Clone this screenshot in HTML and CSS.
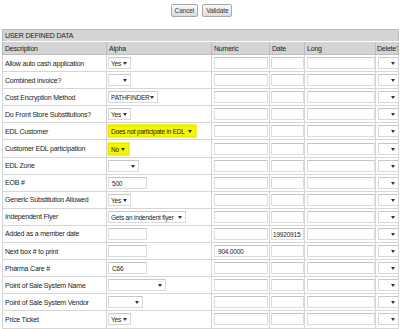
FILE: index.html
```html
<!DOCTYPE html>
<html>
<head>
  <title>User Defined Data</title>
  <link rel="stylesheet" href="styles.css">
</head>
<body>

<div class="actions">
  <button class="btn">Cancel</button>
  <button class="btn">Validate</button>
</div>

<table class="udd">
  <colgroup>
    <col class="c-desc"><col class="c-alpha"><col class="c-num"><col class="c-date"><col class="c-long"><col class="c-del">
  </colgroup>
  <tr class="section"><th colspan="6">USER DEFINED DATA</th></tr>
  <tr class="heads">
    <th>Description</th><th>Alpha</th><th>Numeric</th><th>Date</th><th>Long</th><th>Delete?</th>
  </tr>
  <tr>
    <td>Allow auto cash application</td>
    <td><span class="sel w22">Yes<i></i></span></td>
    <td><span class="txt num"></span></td><td><span class="txt date"></span></td><td><span class="txt long"></span></td>
    <td><span class="sel del"><i></i></span></td>
  </tr>
  <tr>
    <td>Combined invoice?</td>
    <td><span class="sel w22"><i></i></span></td>
    <td><span class="txt num"></span></td><td><span class="txt date"></span></td><td><span class="txt long"></span></td>
    <td><span class="sel del"><i></i></span></td>
  </tr>
  <tr>
    <td>Cost Encryption Method</td>
    <td><span class="sel w48">PATHFINDER<i></i></span></td>
    <td><span class="txt num"></span></td><td><span class="txt date"></span></td><td><span class="txt long"></span></td>
    <td><span class="sel del"><i></i></span></td>
  </tr>
  <tr>
    <td>Do Front Store Substitutions?</td>
    <td><span class="sel w22">Yes<i></i></span></td>
    <td><span class="txt num"></span></td><td><span class="txt date"></span></td><td><span class="txt long"></span></td>
    <td><span class="sel del"><i></i></span></td>
  </tr>
  <tr>
    <td>EDL Customer</td>
    <td><span class="sel w86 mark">Does not participate in EDL<i></i></span></td>
    <td><span class="txt num"></span></td><td><span class="txt date"></span></td><td><span class="txt long"></span></td>
    <td><span class="sel del"><i></i></span></td>
  </tr>
  <tr>
    <td>Customer EDL participation</td>
    <td><span class="sel w20 mark">No<i></i></span></td>
    <td><span class="txt num"></span></td><td><span class="txt date"></span></td><td><span class="txt long"></span></td>
    <td><span class="sel del"><i></i></span></td>
  </tr>
  <tr>
    <td>EDL Zone</td>
    <td><span class="sel w31"><i></i></span></td>
    <td><span class="txt num"></span></td><td><span class="txt date"></span></td><td><span class="txt long"></span></td>
    <td><span class="sel del"><i></i></span></td>
  </tr>
  <tr>
    <td>EOB #</td>
    <td><span class="txt alpha">500</span></td>
    <td><span class="txt num"></span></td><td><span class="txt date"></span></td><td><span class="txt long"></span></td>
    <td><span class="sel del"><i></i></span></td>
  </tr>
  <tr>
    <td>Generic Substitution Allowed</td>
    <td><span class="sel w22">Yes<i></i></span></td>
    <td><span class="txt num"></span></td><td><span class="txt date"></span></td><td><span class="txt long"></span></td>
    <td><span class="sel del"><i></i></span></td>
  </tr>
  <tr>
    <td>Independent Flyer</td>
    <td><span class="sel w78">Gets an indendent flyer<i></i></span></td>
    <td><span class="txt num"></span></td><td><span class="txt date"></span></td><td><span class="txt long"></span></td>
    <td><span class="sel del"><i></i></span></td>
  </tr>
  <tr>
    <td>Added as a member date</td>
    <td><span class="txt alpha"></span></td>
    <td><span class="txt num"></span></td><td><span class="txt date">19920915</span></td><td><span class="txt long"></span></td>
    <td><span class="sel del"><i></i></span></td>
  </tr>
  <tr>
    <td>Next box # to print</td>
    <td><span class="txt alpha"></span></td>
    <td><span class="txt num">904.0000</span></td><td><span class="txt date"></span></td><td><span class="txt long"></span></td>
    <td><span class="sel del"><i></i></span></td>
  </tr>
  <tr>
    <td>Pharma Care #</td>
    <td><span class="txt alpha">C66</span></td>
    <td><span class="txt num"></span></td><td><span class="txt date"></span></td><td><span class="txt long"></span></td>
    <td><span class="sel del"><i></i></span></td>
  </tr>
  <tr>
    <td>Point of Sale System Name</td>
    <td><span class="sel w58"><i></i></span></td>
    <td><span class="txt num"></span></td><td><span class="txt date"></span></td><td><span class="txt long"></span></td>
    <td><span class="sel del"><i></i></span></td>
  </tr>
  <tr>
    <td>Point of Sale System Vendor</td>
    <td><span class="sel w35"><i></i></span></td>
    <td><span class="txt num"></span></td><td><span class="txt date"></span></td><td><span class="txt long"></span></td>
    <td><span class="sel del"><i></i></span></td>
  </tr>
  <tr>
    <td>Price Ticket</td>
    <td><span class="sel w22">Yes<i></i></span></td>
    <td><span class="txt num"></span></td><td><span class="txt date"></span></td><td><span class="txt long"></span></td>
    <td><span class="sel del"><i></i></span></td>
  </tr>
</table>

</body>
</html>
```

FILE: styles.css
```css
/* Base */
body {
  margin: 0;
  padding: 0 2px;
  background: #fff;
  color: #222;
  font-family: "Liberation Sans", Arial, sans-serif;
  font-size: 7px;
  letter-spacing: -0.2px;
}

/* Top buttons */
.actions {
  display: flex;
  justify-content: center;
  gap: 4px;
  padding-top: 4px;
  height: 29px;
  box-sizing: border-box;
  padding-left: 3px;
}
.btn {
  height: 13px;
  padding: 0 3px;
  font-family: inherit;
  font-size: 6.5px;
  letter-spacing: -0.1px;
  color: #333;
  background: linear-gradient(#fafafa, #dcdcdc);
  border: 1px solid #a8a8a8;
  border-radius: 2px;
}

/* Table */
.udd {
  width: 396px;
  table-layout: fixed;
  border-collapse: collapse;
}
.c-desc { width: 104px; }
.c-alpha { width: 105px; }
.c-num { width: 58px; }
.c-date { width: 35px; }
.c-long { width: 71px; }
.c-del { width: 23px; }

.udd th {
  text-align: left;
  font-weight: normal;
  background: #d4d4d4;
  padding: 0 2px;
  border: 1px solid #bcbcbc;
  white-space: nowrap;
  overflow: hidden;
}
.udd .heads th:last-child {
  padding: 0 0 0 1px;
}
.udd .section th {
  height: 11px;
  border-bottom: 1px solid #fff;
}
.udd .heads th {
  height: 12px;
}
.udd td {
  height: 16.1px;
  padding: 0 1px;
  border: 1px solid #d6d6d6;
  white-space: nowrap;
  overflow: hidden;
}
.udd td:first-child {
  padding-left: 2px;
}

/* Text boxes */
.txt {
  display: block;
  height: 12px;
  line-height: 12px;
  box-sizing: border-box;
  padding: 0 3px;
  font-size: 6.5px;
  border: 1px solid #dcdcdc;
  border-top-color: #c4c4c4;
  background: #fff;
}
.txt.alpha { width: 39px; }
.txt.num { width: 54px; margin-left: 1px; }
.txt.date { width: 33px; padding: 0 1px; }
.txt.long { width: 68px; margin-left: 1px; }

/* Drop downs */
.sel {
  position: relative;
  display: block;
  height: 12px;
  line-height: 12px;
  box-sizing: border-box;
  padding: 0 8px 0 2px;
  font-size: 6.5px;
  border: 1px solid #d8d8d8;
  border-top-color: #c8c8c8;
  background: #fff;
  overflow: hidden;
}
.sel i {
  position: absolute;
  right: 3px;
  top: 4px;
  width: 0;
  height: 0;
  border-left: 2px solid transparent;
  border-right: 2px solid transparent;
  border-top: 3px solid #333;
}
.sel.mark {
  background: #f6f600;
  border-color: #e8e800;
  box-shadow: 0 0 0 1px #f8f840;
}
.w20 { width: 21px; }
.w22 { width: 23px; }
.w31 { width: 31px; }
.w35 { width: 35px; }
.w48 { width: 50px; }
.w58 { width: 58px; }
.w78 { width: 78px; }
.w86 { width: 88px; }
.sel.del { width: 21px; margin-left: 1px; }
```
